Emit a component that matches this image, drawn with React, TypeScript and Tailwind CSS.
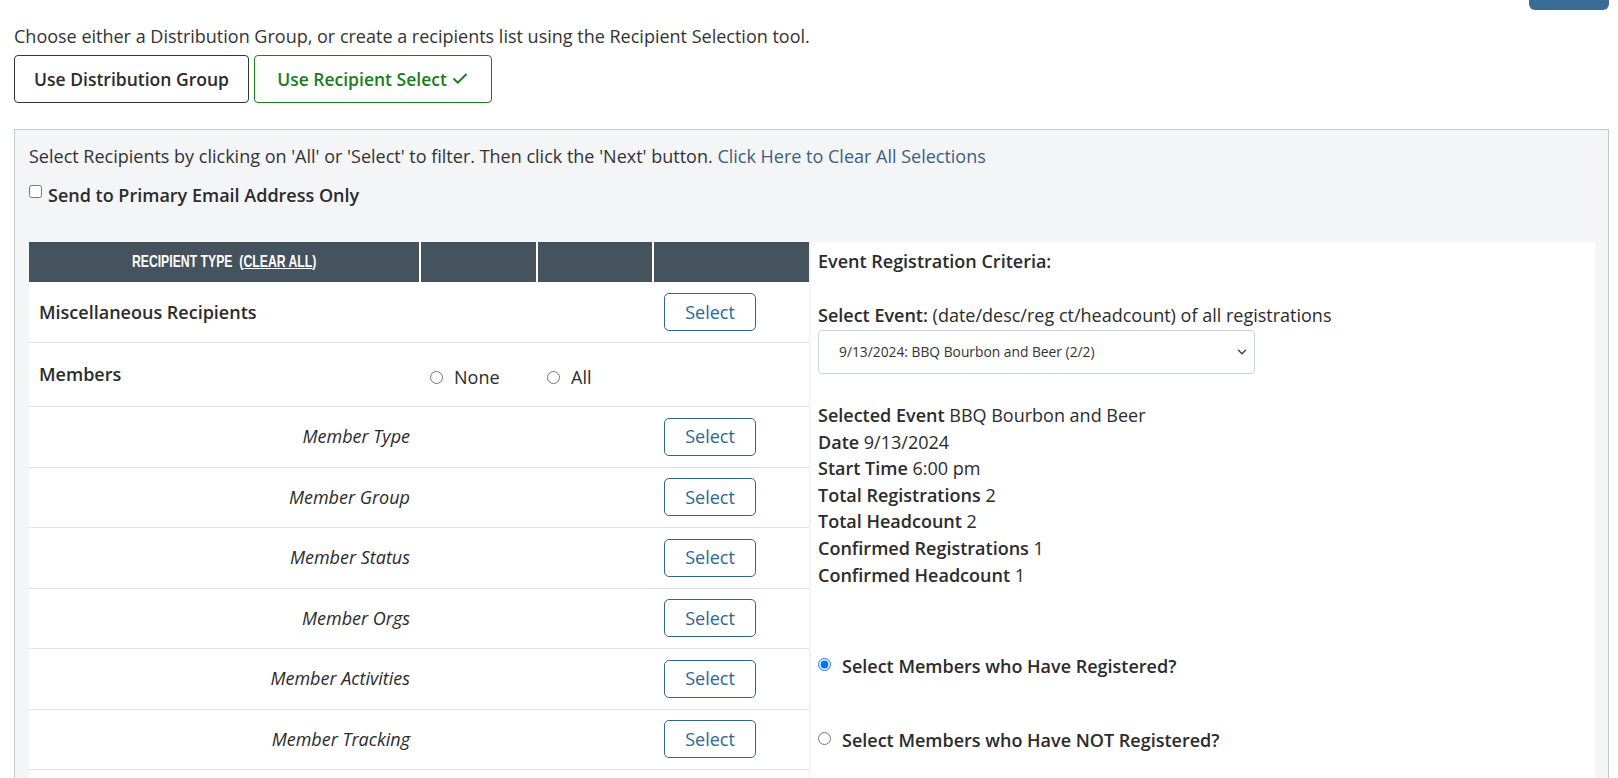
import { Check, ChevronDown } from 'lucide-react';

const memberRows = [
  'Member Type',
  'Member Group',
  'Member Status',
  'Member Orgs',
  'Member Activities',
  'Member Tracking',
];

function SelectButton() {
  return (
    <button className="w-[92px] h-[38px] rounded-[5px] border border-[#2f6690] bg-white text-[18px] text-[#2f6690]">
      Select
    </button>
  );
}

function RecipientTable() {
  return (
    <div className="w-[780px] shrink-0 bg-white">
      {/* header */}
      <div className="flex h-[40px] gap-[2px] bg-white">
        <div className="w-[390px] bg-[#44535e] flex items-center justify-center text-white">
          <span className="inline-block whitespace-nowrap scale-x-[0.72] text-[17px] font-bold uppercase [font-family:'Liberation_Sans',sans-serif]">
            Recipient Type&nbsp;&nbsp;(<span className="underline">Clear All</span>)
          </span>
        </div>
        <div className="w-[115px] bg-[#44535e]" />
        <div className="w-[114px] bg-[#44535e]" />
        <div className="flex-1 bg-[#44535e]" />
      </div>

      {/* misc */}
      <div className="flex items-center h-[61px] border-b border-[#dee2e6]">
        <div className="w-[392px] pl-[10px] font-semibold text-[18px]">Miscellaneous Recipients</div>
        <div className="w-[117px]" />
        <div className="w-[116px]" />
        <div className="pl-[10px]">
          <SelectButton />
        </div>
      </div>

      {/* members */}
      <div className="flex items-center h-[64px] border-b border-[#dee2e6]">
        <div className="w-[392px] pl-[10px] font-semibold text-[18px]">Members</div>
        <label className="w-[117px] pl-[9px] flex items-center gap-[11px] text-[18px] mt-[6px]">
          <input type="radio" name="members" className="m-0 w-[13px] h-[13px]" />
          None
        </label>
        <label className="w-[116px] pl-[9px] flex items-center gap-[11px] text-[18px] mt-[6px]">
          <input type="radio" name="members" className="m-0 w-[13px] h-[13px]" />
          All
        </label>
      </div>

      {memberRows.map((label) => (
        <div key={label} className="flex items-center h-[60.5px] border-b border-[#dee2e6]">
          <div className="w-[390px] pr-[9px] text-right italic text-[18px]">{label}</div>
          <div className="w-[119px]" />
          <div className="w-[116px]" />
          <div className="pl-[10px]">
            <SelectButton />
          </div>
        </div>
      ))}
      <div className="h-[60px] border-b border-[#dee2e6]" />
    </div>
  );
}

function EventCriteria() {
  const details: [string, string][] = [
    ['Selected Event', 'BBQ Bourbon and Beer'],
    ['Date', '9/13/2024'],
    ['Start Time', '6:00 pm'],
    ['Total Registrations', '2'],
    ['Total Headcount', '2'],
    ['Confirmed Registrations', '1'],
    ['Confirmed Headcount', '1'],
  ];

  return (
    <div className="flex-1 bg-white pl-[7px] pt-[7px] text-[18px]">
      <div className="font-semibold leading-[24px]">Event Registration Criteria:</div>

      <div className="mt-[30px] leading-[24px]">
        <span className="font-semibold">Select Event:</span> (date/desc/reg ct/headcount) of all registrations
      </div>

      <div className="relative mt-[3px] w-[437px]">
        <select
          defaultValue="1"
          className="appearance-none w-full h-[44px] rounded-[4px] border border-[#ced4da] bg-white pl-[20px] pr-[36px] text-[13.8px] text-[#333]"
        >
          <option value="1">9/13/2024: BBQ Bourbon and Beer (2/2)</option>
        </select>
        <ChevronDown
          className="absolute right-[6px] top-[15px] w-[14px] h-[14px] text-[#444] pointer-events-none"
          strokeWidth={2.5}
        />
      </div>

      <div className="mt-[28px] leading-[26.6px]">
        {details.map(([k, v]) => (
          <div key={k}>
            <span className="font-semibold">{k}</span> {v}
          </div>
        ))}
      </div>

      <label className="mt-[66px] flex items-center gap-[11px] font-semibold leading-[24px]">
        <input type="radio" name="reg" defaultChecked className="m-0 w-[13px] h-[13px] -mt-[4px]" />
        Select Members who Have Registered?
      </label>

      <label className="mt-[50px] flex items-center gap-[11px] font-semibold leading-[24px]">
        <input type="radio" name="reg" className="m-0 w-[13px] h-[13px] -mt-[4px]" />
        Select Members who Have NOT Registered?
      </label>
      <div className="h-[40px]" />
    </div>
  );
}

export default function App() {
  return (
    <div className="min-h-screen bg-white text-[#2b2b2b] [font-family:'Open_Sans','Liberation_Sans',sans-serif]">
      {/* cut-off action button at the very top */}
      <div className="flex justify-end pr-[9px]">
        <div className="w-[80px] h-[10px] rounded-b-[6px] bg-[#3b6c96]" />
      </div>

      <div className="px-[14px] pr-[9px]">
        <p className="mt-[14px] text-[18px] leading-[24px] text-[#333]">
          Choose either a Distribution Group, or create a recipients list using the Recipient Selection tool.
        </p>

        <div className="mt-[7px] flex gap-[5px]">
          <button className="h-[48px] w-[235px] rounded-[4px] border border-[#333] bg-white font-semibold text-[17.5px] text-[#2b2b2b]">
            Use Distribution Group
          </button>
          <button className="h-[48px] w-[238px] rounded-[4px] border border-[#1c7c1c] bg-white font-semibold text-[17.5px] text-[#1c7c1c] flex items-center justify-center gap-[4px]">
            Use Recipient Select
            <Check className="w-[18px] h-[18px]" strokeWidth={2.5} />
          </button>
        </div>

        <div className="mt-[26px] border border-[#c3c8cd] bg-[#f4f5f7] pl-[14px] pr-[13px] pt-[14px]">
          <p className="text-[18px] leading-[24px] text-[#333]">
            Select Recipients by clicking on 'All' or 'Select' to filter. Then click the 'Next' button.{' '}
            <a className="text-[#3d5f80]">Click Here to Clear All Selections</a>
          </p>

          <label className="mt-[15px] flex items-start gap-[6px] text-[18px] font-semibold leading-[24px]">
            <input type="checkbox" className="m-0 mt-[2px] w-[13px] h-[13px]" />
            Send to Primary Email Address Only
          </label>

          <div className="mt-[35px] flex gap-[2px]">
            <RecipientTable />
            <EventCriteria />
          </div>
        </div>
      </div>
    </div>
  );
}
